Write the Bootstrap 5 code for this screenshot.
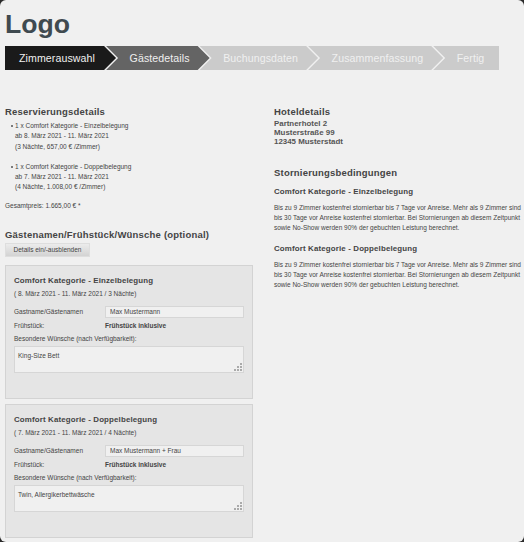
<!DOCTYPE html>
<html lang="de">
<head>
  <meta charset="UTF-8">
  <meta name="viewport" content="width=device-width, initial-scale=1">
  <title>Gästedetails</title>
  <link href="https://cdn.jsdelivr.net/npm/bootstrap@5.3.0/dist/css/bootstrap.min.css" rel="stylesheet">
  <style>
    html, body { height: 100%; }
    body {
      background-color: #2a2a2a;
      color: #444;
      font-family: "Liberation Sans", Arial, sans-serif;
      font-size: 6.5px;
      line-height: 10.3px;
      overflow: hidden;
    }
    .seite {
      background-color: #f0f0f0;
      border-radius: 6px;
      height: 542px;
      padding: 9px 5px 0;
    }
    .logo-text {
      color: #3f4a50;
      font-size: 26.6px;
      font-weight: 700;
      line-height: 30px;
      margin: 0 0 7px;
    }
    /* Schrittleiste */
    .schritte { width: 494px; height: 24px; }
    .schritt {
      color: #f0f0f0;
      background-color: #cbcbcb;
      font-size: 10.6px;
      line-height: 24px;
      letter-spacing: .1px;
      padding: 0 20px 0 23.5px;
      margin-right: -10px;
      white-space: nowrap;
      clip-path: polygon(0 0, calc(100% - 12px) 0, 100% 50%, calc(100% - 12px) 100%, 0 100%, 12px 50%);
    }
    .schritt:first-child { padding-left: 14px; padding-right: 21px; clip-path: polygon(0 0, calc(100% - 12px) 0, 100% 50%, calc(100% - 12px) 100%, 0 100%); }
    .schritt:last-child { margin-right: 0; flex: 1 1 0; padding-right: 0; clip-path: polygon(0 0, 100% 0, 100% 100%, 0 100%, 12px 50%); }
    .schritt-aktiv { background-color: #1a1a1a; }
    .schritt-offen { background-color: #646464; }

    .spalte-links { width: 269px; flex: none; padding-right: 21px; }
    .spalte-rechts { width: 248px; flex: none; }
    .titel {
      color: #444;
      font-size: 9.5px;
      font-weight: 700;
      letter-spacing: .2px;
      line-height: 12px;
      margin: 0;
    }
    .titel-klein { font-size: 7.9px; letter-spacing: .15px; line-height: 10.5px; }
    .hotel-adresse { font-weight: 700; font-size: 7.9px; line-height: 9px; color: #555; margin-top: -2px; }
    .reserv-titel { margin-top: 36px; margin-bottom: 3px; }
    .liste { padding-left: 10px; margin: 0; list-style: none; }
    .liste li::before {
      content: "";
      display: inline-block;
      width: 2px;
      height: 2px;
      border-radius: 50%;
      background-color: #555;
      margin-left: -4.5px;
      margin-right: 2.5px;
      vertical-align: middle;
    }
    .liste-abstand { margin-top: 10px; }
    .gesamt { margin: 8px 0 0; }
    .gaeste-titel { margin: 18px 0 2px; }
    .btn-details {
      --bs-btn-font-size: 6.5px;
      --bs-btn-padding-x: 0;
      --bs-btn-padding-y: 0;
      --bs-btn-border-radius: 0;
      --bs-btn-color: #444;
      background: linear-gradient(#ececec, #d3d3d3);
      border: 1px solid #dedede;
      width: 85px;
      height: 14px;
      line-height: 12px;
    }
    .zimmer-box {
      background-color: #e5e5e5;
      border: 1px solid #d3d3d3;
      height: 134px;
      width: 248px;
      padding: 10px 8px 0;
    }
    .erste-box { margin-top: 8px; }
    .zimmer-box + .zimmer-box { margin-top: 5px; }
    .datum { margin: 2px 0 7px; }
    .feld-name { width: 91px; flex: none; }
    .feld {
      background-color: #f0f0f0;
      border: 1px solid #d6d6d6;
      border-radius: 0;
      color: #444;
      font-family: inherit;
      font-size: 6.5px;
      line-height: 10px;
      padding: 0 4px;
      min-height: 0;
    }
    .feld-eingabe { height: 12px; width: 139px; }
    .feld-text { height: 27px; width: 230px; padding: 4px 3px; display: block; resize: none; }
    .feld-griff { position: absolute; right: 2px; bottom: 2px; width: 8px; height: 8px; }
    .zeile-frueh { margin-top: 3px; }
    .zeile-wunsch { margin: 3px 0 2px; }
    .storno-titel { margin: 21px 0 8px; }
    .storno-zimmer { margin-bottom: 5px; }
    .storno-text { margin: 0 0 11px; }
  </style>
</head>
<body>
  <div class="seite">
    <h1 class="logo-text">Logo</h1>

    <div class="schritte d-flex">
      <div class="schritt schritt-aktiv">Zimmerauswahl</div>
      <div class="schritt schritt-offen">Gästedetails</div>
      <div class="schritt">Buchungsdaten</div>
      <div class="schritt">Zusammenfassung</div>
      <div class="schritt">Fertig</div>
    </div>

    <div class="d-flex">
      <div class="spalte-links">
        <h2 class="titel reserv-titel">Reservierungsdetails</h2>
        <ul class="liste">
          <li>1 x Comfort Kategorie - Einzelbelegung<br>ab 8. März 2021 - 11. März 2021<br>(3 Nächte, 657,00 € /Zimmer)</li>
          <li class="liste-abstand">1 x Comfort Kategorie - Doppelbelegung<br>ab 7. März 2021 - 11. März 2021<br>(4 Nächte, 1.008,00 € /Zimmer)</li>
        </ul>
        <p class="gesamt">Gesamtpreis: 1.665,00 € *</p>
        <h2 class="titel gaeste-titel">Gästenamen/Frühstück/Wünsche (optional)</h2>
        <button type="button" class="btn btn-details d-block">Details ein/-ausblenden</button>

        <div class="zimmer-box erste-box">
          <h3 class="titel titel-klein">Comfort Kategorie - Einzelbelegung</h3>
          <p class="datum">( 8. März 2021 - 11. März 2021 / 3 Nächte)</p>
          <div class="d-flex align-items-center">
            <span class="feld-name">Gastname/Gästenamen</span>
            <input class="feld feld-eingabe" type="text" value="Max Mustermann">
          </div>
          <div class="d-flex zeile-frueh">
            <span class="feld-name">Frühstück:</span>
            <strong>Frühstück inklusive</strong>
          </div>
          <div class="zeile-wunsch">Besondere Wünsche (nach Verfügbarkeit):</div>
          <div class="position-relative">
            <textarea class="feld feld-text">King-Size Bett</textarea>
            <svg class="feld-griff" viewBox="0 0 8 8"><path fill="#aaa" d="M6 0h2v2H6zM3 3h2v2H3zM6 3h2v2H6zM0 6h2v2H0zM3 6h2v2H3zM6 6h2v2H6z"/></svg>
          </div>
        </div>

        <div class="zimmer-box">
          <h3 class="titel titel-klein">Comfort Kategorie - Doppelbelegung</h3>
          <p class="datum">( 7. März 2021 - 11. März 2021 / 4 Nächte)</p>
          <div class="d-flex align-items-center">
            <span class="feld-name">Gastname/Gästenamen</span>
            <input class="feld feld-eingabe" type="text" value="Max Mustermann + Frau">
          </div>
          <div class="d-flex zeile-frueh">
            <span class="feld-name">Frühstück:</span>
            <strong>Frühstück inklusive</strong>
          </div>
          <div class="zeile-wunsch">Besondere Wünsche (nach Verfügbarkeit):</div>
          <div class="position-relative">
            <textarea class="feld feld-text">Twin, Allergikerbettwäsche</textarea>
            <svg class="feld-griff" viewBox="0 0 8 8"><path fill="#aaa" d="M6 0h2v2H6zM3 3h2v2H3zM6 3h2v2H6zM0 6h2v2H0zM3 6h2v2H3zM6 6h2v2H6z"/></svg>
          </div>
        </div>
      </div>

      <div class="spalte-rechts">
        <h2 class="titel reserv-titel">Hoteldetails</h2>
        <div class="hotel-adresse">Partnerhotel 2<br>Musterstraße 99<br>12345 Musterstadt</div>
        <h2 class="titel storno-titel">Stornierungsbedingungen</h2>
        <h3 class="titel titel-klein storno-zimmer">Comfort Kategorie - Einzelbelegung</h3>
        <p class="storno-text">Bis zu 9 Zimmer kostenfrei stornierbar bis 7 Tage vor Anreise. Mehr als 9 Zimmer sind<br>bis 30 Tage vor Anreise kostenfrei stornierbar. Bei Stornierungen ab diesem Zeitpunkt<br>sowie No-Show werden 90% der gebuchten Leistung berechnet.</p>
        <h3 class="titel titel-klein storno-zimmer">Comfort Kategorie - Doppelbelegung</h3>
        <p class="storno-text">Bis zu 9 Zimmer kostenfrei stornierbar bis 7 Tage vor Anreise. Mehr als 9 Zimmer sind<br>bis 30 Tage vor Anreise kostenfrei stornierbar. Bei Stornierungen ab diesem Zeitpunkt<br>sowie No-Show werden 90% der gebuchten Leistung berechnet.</p>
      </div>
    </div>
  </div>
  <script src="https://cdn.jsdelivr.net/npm/bootstrap@5.3.0/dist/js/bootstrap.bundle.min.js"></script>
</body>
</html>
